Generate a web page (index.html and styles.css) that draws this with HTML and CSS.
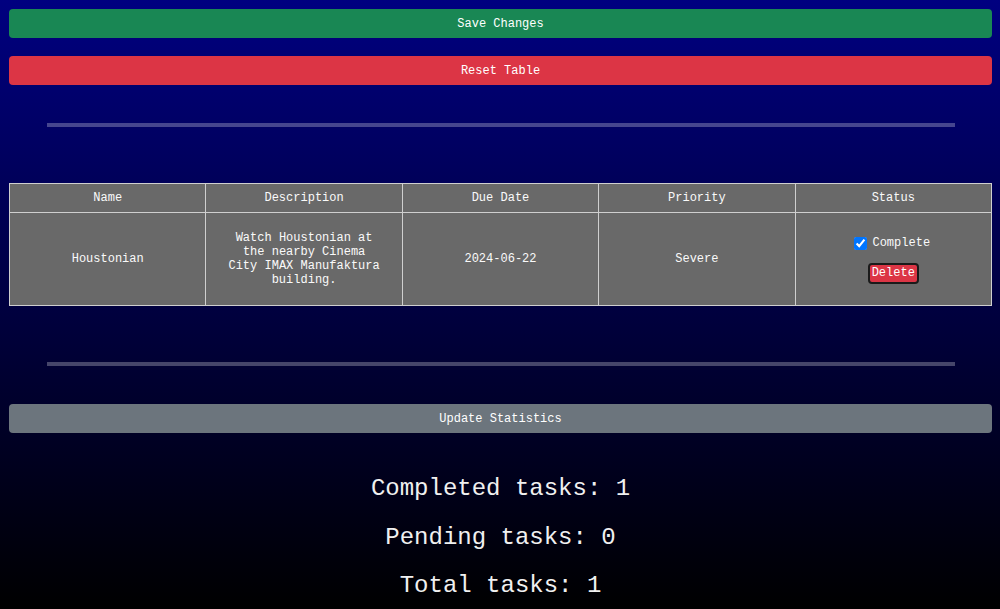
FILE: index.html
```html
<!DOCTYPE html>
<html lang="en">
<head>
<meta charset="utf-8">
<title>Tasks</title>
<link rel="stylesheet" href="styles.css">
</head>
<body>
  <div class="page">
    <button class="btn btn-save">Save Changes</button>
    <button class="btn btn-reset">Reset Table</button>
    <hr class="divider">
    <table class="tasks">
      <thead>
        <tr>
          <th>Name</th>
          <th>Description</th>
          <th>Due Date</th>
          <th>Priority</th>
          <th>Status</th>
        </tr>
      </thead>
      <tbody>
        <tr>
          <td>Houstonian</td>
          <td>Watch Houstonian at the nearby Cinema City IMAX Manufaktura building.</td>
          <td>2024-06-22</td>
          <td>Severe</td>
          <td>
            <div class="status-line"><input type="checkbox" checked> Complete</div>
            <button class="btn-delete">Delete</button>
          </td>
        </tr>
      </tbody>
    </table>
    <hr class="divider">
    <button class="btn btn-update">Update Statistics</button>
    <div class="stats">
      <p>Completed tasks: 1</p>
      <p>Pending tasks: 0</p>
      <p>Total tasks: 1</p>
    </div>
  </div>
</body>
</html>
```
FILE: styles.css
```css
html {
  height: 100%;
  background: linear-gradient(to bottom, #000080 0px, #000000 609px) no-repeat;
  background-color: #000;
}
body {
  margin: 0;
  font-family: "Liberation Mono", "Courier New", monospace;
  color: #fff;
}
.page {
  display: flex;
  flex-direction: column;
  padding: 9px 8px 0 9px;
}
.btn {
  display: block;
  width: 100%;
  height: 29px;
  border: none;
  border-radius: 4px;
  color: #fff;
  font-family: "Liberation Mono", "Courier New", monospace;
  font-size: 12px;
  padding: 0;
  margin: 0;
}
.btn-save { background: #198754; }
.btn-reset { background: #dc3545; margin-top: 18px; }
.btn-update { background: #6c757d; }
.divider {
  border: none;
  height: 4px;
  background: rgba(255, 255, 255, 0.27);
  margin: 38px 37px 38px 38px;
}
.tasks {
  width: 100%;
  border-collapse: collapse;
  table-layout: fixed;
  background: #696969;
  margin: 18px 0;
  font-size: 12px;
}
.tasks th,
.tasks td {
  border: 1px solid #cfcfcf;
  text-align: center;
  font-weight: normal;
  color: #fafafa;
}
.tasks th {
  padding: 7px 8px;
}
.tasks td {
  padding: 18px 20px;
  vertical-align: middle;
}
.status-line {
  display: flex;
  align-items: center;
  justify-content: center;
  gap: 2px;
  height: 17px;
  padding-right: 6px;
}
.status-line input {
  margin: 3px 3px 3px 4px;
  width: 13px;
  height: 13px;
}
.btn-delete {
  margin-top: 11px;
  background: #dc3545;
  color: #fff;
  border: 2px solid #1a1a1a;
  border-radius: 4px;
  font-family: "Liberation Mono", "Courier New", monospace;
  font-size: 12px;
  line-height: 15px;
  padding: 1px 2px;
}
.stats {
  padding-top: 21px;
  text-align: center;
  font-size: 24px;
}
.stats p {
  margin: 21px 0;
  line-height: 27.5px;
  color: #f0f0f0;
}
```
